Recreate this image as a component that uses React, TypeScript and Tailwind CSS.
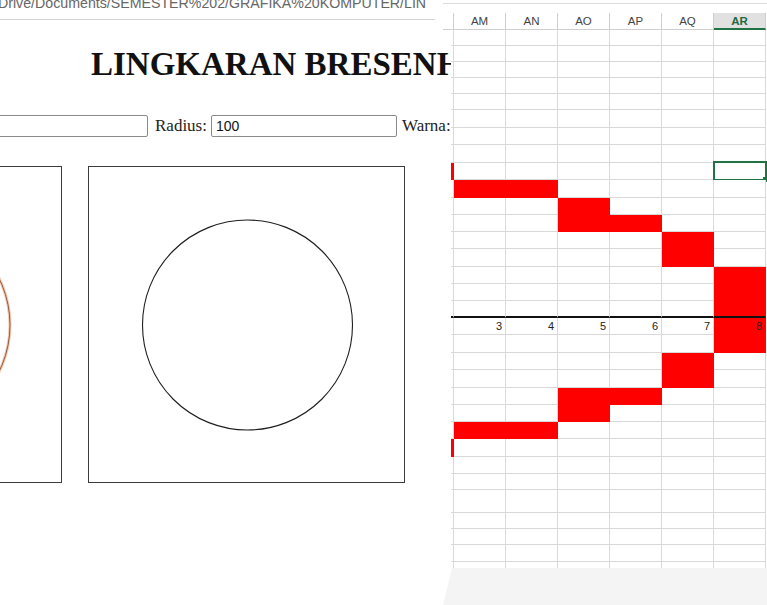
import React from "react";

const H = [16,16,16,16,16,18,17,18,17,18,17,17,17,18,17,17,17,17,18,17,18,17,17,17,18,17,16,23,16,16,17,6];
const RED: Record<number, number[]> = {
  8: [0], 9: [1, 2], 10: [3], 11: [3, 4], 12: [5], 13: [5], 14: [6], 15: [6], 16: [6],
  17: [6], 18: [6], 19: [5], 20: [5], 21: [3, 4], 22: [3], 23: [1, 2], 24: [0],
};
const COLS = ["AM", "AN", "AO", "AP", "AQ", "AR"];

function Cell({ row, col }: { row: number; col: number }) {
  const red = (RED[row] || []).includes(col);
  const axis = row === 16;
  const last = row === H.length - 1;
  const width = col === 0 ? "w-[3px]" : "w-[52px]";
  const color = red ? "bg-[#ff0000] border-[#ff0000]" : "bg-white border-[#d9d9d9]";
  const bottom = axis ? "border-b-2 border-b-[#111]" : last ? "border-b-0" : "";
  return (
    <div className={`relative shrink-0 border-r border-b ${width} ${color} ${bottom}`}>
      {row === 17 && col > 0 && (
        <div className="h-full pr-[3px] text-right text-[11px] leading-[17px] text-[#222] font-['Liberation_Sans',Arial,sans-serif]">
          {col + 2}
        </div>
      )}
      {row === 8 && col === 6 && (
        <div className="absolute left-[-1px] top-[-2px] h-[20px] w-[54px] border-2 border-[#217346]">
          <div className="absolute right-[-3px] bottom-[-3px] h-[5px] w-[5px] bg-[#217346]" />
        </div>
      )}
    </div>
  );
}

function CanvasBox({ tinted }: { tinted?: boolean }) {
  return (
    <div className="h-[317px] w-[317px] shrink-0 border border-[#3c3c3c] bg-white">
      <svg width="315" height="315" viewBox="0 0 315 315">
        {tinted ? (
          <>
            <circle cx="159" cy="158" r="105" fill="none" stroke="#f2b08c" strokeWidth="3" opacity="0.7" />
            <circle cx="159" cy="158" r="105" fill="none" stroke="#8a5a4a" strokeWidth="1" />
          </>
        ) : (
          <circle cx="158.5" cy="158" r="105" fill="none" stroke="#1e1e1e" strokeWidth="1.1" />
        )}
      </svg>
    </div>
  );
}

export default function App() {
  return (
    <div className="flex h-[605px] w-[767px] overflow-hidden bg-white">
      {/* Browser page */}
      <div className="w-[452px] shrink-0 overflow-hidden">
        <div className="h-[20px] w-[435px] overflow-hidden border-b border-[#d4d4d4]">
          <div className="relative -left-[2px] -top-[4px] whitespace-nowrap text-[14.2px] leading-none text-[#666] font-['Liberation_Sans',Arial,sans-serif]">
            Drive/Documents/SEMESTER%202/GRAFIKA%20KOMPUTER/LIN
          </div>
        </div>
        <h1 className="mt-[28px] whitespace-nowrap pl-[91px] text-[33px] font-bold leading-none text-[#111] font-['Liberation_Serif','Times_New_Roman',serif]">
          LINGKARAN BRESENHAM
        </h1>
        <div className="mt-[34px] flex h-[22px] items-center whitespace-nowrap text-[17px] text-[#222] font-['Liberation_Serif','Times_New_Roman',serif]">
          <div className="-ml-[38px] h-[22px] w-[186px] shrink-0 rounded-[2px] border border-[#8a8a8a] bg-white" />
          <span className="ml-[7px]">Radius:</span>
          <div className="ml-[4px] flex h-[22px] w-[186px] shrink-0 items-center rounded-[2px] border border-[#8a8a8a] bg-white pl-[4px] text-[14px] text-[#111] font-['Liberation_Sans',Arial,sans-serif]">
            100
          </div>
          <span className="ml-[5px]">Warna:</span>
        </div>
        <div className="-ml-[255px] mt-[29px] flex gap-[26px]">
          <CanvasBox tinted />
          <CanvasBox />
        </div>
      </div>

      {/* Spreadsheet */}
      <div className="relative z-10 -ml-[9px] flex w-[324px] shrink-0 flex-col">
        <div className="h-[13px] pt-[3px]">
          <div className="border-t border-[#dcdcdc]" />
        </div>
        <div className="flex h-[17px] bg-white">
          <div className="w-[11px] shrink-0 border-r border-b border-[#cfcfcf]" />
          {COLS.map((c) => (
            <div
              key={c}
              className={
                c === "AR"
                  ? "w-[52px] shrink-0 border-r border-b-2 border-r-[#cfcfcf] border-b-[#217346] bg-[#e1e1e1] text-center text-[11.5px] font-bold leading-[16px] text-[#1d6b3f] font-['Liberation_Sans',Arial,sans-serif]"
                  : "w-[52px] shrink-0 border-r border-b border-[#cfcfcf] text-center text-[11.5px] leading-[16px] text-[#444] font-['Liberation_Sans',Arial,sans-serif]"
              }
            >
              {c}
            </div>
          ))}
        </div>
        {H.map((h, r) => (
          <div key={r} className="flex" style={{ height: h }}>
            <div className="w-[8px] shrink-0" />
            {[0, 1, 2, 3, 4, 5, 6].map((c) => (
              <Cell key={c} row={r} col={c} />
            ))}
          </div>
        ))}
        <div className="flex-1 bg-[#f4f4f4] [clip-path:polygon(9px_0,100%_0,100%_100%,0_100%)]" />
      </div>
    </div>
  );
}
